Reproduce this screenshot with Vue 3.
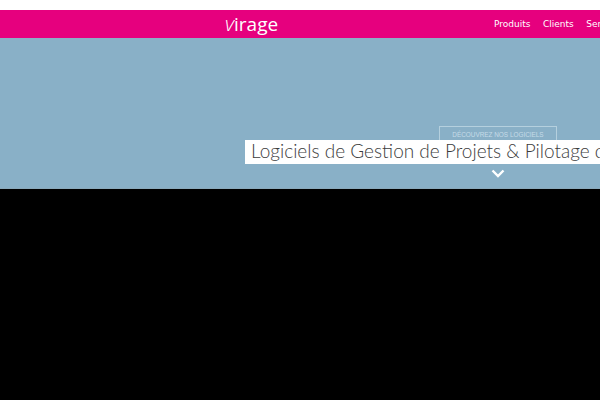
<script setup>
const links = ['Produits', 'Clients', 'Services']
</script>

<template>
  <div class="page">
    <header class="topbar">
      <a class="logo"><i>v</i>irage</a>
      <nav class="menu">
        <a v-for="link in links" :key="link">{{ link }}</a>
      </nav>
    </header>
    <section class="hero">
      <a class="discover">DÉCOUVREZ NOS LOGICIELS</a>
      <h1 class="title">Logiciels de Gestion de Projets &amp; Pilotage d'Activités</h1>
      <svg class="chevron" width="14" height="9" viewBox="0 0 14 9">
        <path d="M1.5 1.5 L7 7 L12.5 1.5" fill="none" stroke="#fff" stroke-width="2.4" />
      </svg>
    </section>
  </div>
</template>

<style>
html, body {
  background: #000;
}
</style>

<style scoped>
.page {
  width: 600px;
  height: 400px;
  overflow: hidden;
  background: #000;
  font-family: "Open Sans", sans-serif;
}

.topbar {
  display: flex;
  align-items: center;
  height: 28px;
  border-top: 10px solid #fff;
  box-sizing: content-box;
  background: #e6007e;
  color: #fff;
  padding-left: 225px;
  white-space: nowrap;
}

.logo {
  font-family: "Open Sans", sans-serif;
  font-size: 19px;
  line-height: 26px;
  width: 269px;
  flex: none;
  align-self: flex-start;
}

.logo i {
  font-size: 21px;
  font-weight: 300;
}

.menu {
  display: flex;
  gap: 12.5px;
  font-family: "DejaVu Sans", sans-serif;
  font-size: 9px;
}

.hero {
  display: flex;
  flex-direction: column;
  height: 151px;
  padding-top: 88px;
  padding-left: 245px;
  box-sizing: border-box;
  background: #89b0c7;
  border-bottom: 1px solid #8aa9bb;
  white-space: nowrap;
}

.discover {
  align-self: flex-start;
  margin-left: 194px;
  width: 118px;
  height: 14px;
  box-sizing: border-box;
  border: 1px solid #b5d0de;
  border-bottom: none;
  text-align: center;
  font-family: "Liberation Sans", sans-serif;
  font-size: 6.4px;
  line-height: 15px;
  color: #c6dce7;
}

.title {
  margin: 0;
  width: 700px;
  height: 24px;
  flex: none;
  padding-left: 6px;
  background: #fff;
  color: #3c3c3c;
  font-family: "Lato", sans-serif;
  font-size: 19px;
  font-weight: 300;
  line-height: 21px;
}

.chevron {
  margin-top: 5px;
  margin-left: 246px;
}
</style>
